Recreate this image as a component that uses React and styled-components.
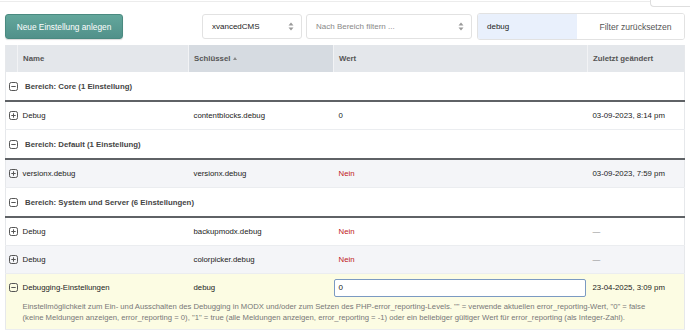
import React from "react";
import styled, { createGlobalStyle } from "styled-components";

const GlobalStyle = createGlobalStyle`
    body {
        margin: 0;
        background: #fff;
        font-family: "Liberation Sans", Arial, sans-serif;
        color: #333;
    }
`;

const Page = styled.div`
    width: 690px;
    height: 331px;
    overflow: hidden;
`;

const TopStrip = styled.div`
    display: flex;
    height: 7px;
`;

const TopLine = styled.div`
    flex: 1;
    height: 1px;
    border-bottom: 1px solid #ececec;
`;

const TopTab = styled.div`
    width: 39px;
    height: 6px;
    border-left: 1px solid #dedede;
    border-bottom: 1px solid #dedede;
    border-bottom-left-radius: 4px;
`;

const Toolbar = styled.div`
    display: flex;
    justify-content: space-between;
    align-items: center;
    padding: 7px 5px 0 5px;
    height: 25px;
`;

const PrimaryButton = styled.button`
    height: 25px;
    width: 118px;
    padding: 0;
    border: 1px solid #4a8a80;
    border-radius: 3px;
    background: linear-gradient(#63a79c, #51918a);
    color: #fff;
    font-family: inherit;
    font-size: 8.3px;
    box-shadow: 0 1px 1px rgba(0, 0, 0, 0.15);
`;

const Filters = styled.div`
    display: flex;
    align-items: center;
    gap: 4px;
`;

const SelectBox = styled.div`
    box-sizing: border-box;
    display: flex;
    align-items: center;
    justify-content: space-between;
    width: ${(p) => p.$width}px;
    height: 25px;
    padding: 0 7px 0 9px;
    border: 1px solid #e2e2e2;
    border-radius: 3px;
    background: #fff;
    font-size: 8px;
    color: ${(p) => (p.$placeholder ? "#888" : "#222")};
    margin-right: ${(p) => p.$gapRight || 0}px;
`;

const SearchGroup = styled.div`
    display: flex;
    height: 25px;
    border: 1px solid #e2e2e2;
    border-radius: 3px;
    overflow: hidden;
`;

const SearchInput = styled.div`
    box-sizing: border-box;
    display: flex;
    align-items: center;
    width: 99px;
    padding-left: 9px;
    background: #e9f0fc;
    font-size: 8px;
    color: #222;
`;

const ResetButton = styled.div`
    box-sizing: border-box;
    display: flex;
    align-items: center;
    justify-content: center;
    width: 107px;
    padding-left: 10px;
    background: #fff;
    font-size: 8.6px;
    color: #555;
`;

const TableWrap = styled.div`
    padding: 6px 5px 0 5px;
`;

const Table = styled.table`
    width: 100%;
    border-collapse: collapse;
    table-layout: fixed;
    font-size: 7.8px;
    border-left: 1px solid #e6e8eb;
    border-right: 1px solid #e6e8eb;
`;

const HeadCell = styled.th`
    height: 27px;
    padding: 0 0 0 ${(p) => (p.$first ? 0 : 5)}px;
    text-align: left;
    font-weight: bold;
    color: #555;
    background: ${(p) => (p.$sorted ? "#d6dbe1" : "#e4e7eb")};
    border-left: ${(p) => (p.$first ? "none" : "1px solid #f2f3f5")};
`;

const SortArrow = styled.span`
    display: inline-block;
    margin-left: 3px;
    width: 0;
    height: 0;
    border-left: 2.5px solid transparent;
    border-right: 2.5px solid transparent;
    border-bottom: 3px solid #888;
    vertical-align: 1px;
`;

const GroupRow = styled.tr`
    background: #fff;
    border-bottom: 2px solid #5f6266;
`;

const GroupCell = styled.td`
    height: 28px;
    padding: 0 0 0 5px;
    font-weight: bold;
    color: #444;
`;

const DataRow = styled.tr`
    background: ${(p) => (p.$active ? "#fcfce3" : p.$alt ? "#f4f5f8" : "#fff")};
    border-bottom: ${(p) => (p.$last ? "none" : "1px solid #ebedf0")};
`;

const Cell = styled.td`
    height: ${(p) => p.$h || 27}px;
    padding: 0 0 0 ${(p) => (p.$flush ? 0 : 5)}px;
    color: ${(p) => p.$color || "#222"};
    white-space: nowrap;
    overflow: hidden;
`;

const IconCell = styled.td`
    padding: 0 0 0 3px;
    vertical-align: middle;
`;

const GroupInner = styled.div`
    display: flex;
    align-items: center;
    gap: 7px;
    margin-left: -5px;
    padding-left: 3px;
`;

const Dash = styled.span`
    color: #8c8c8c;
`;

const ValueInput = styled.div`
    box-sizing: border-box;
    display: flex;
    align-items: center;
    width: 252px;
    height: 18px;
    padding-left: 4px;
    border: 1px solid #7b9ac2;
    border-radius: 2px;
    background: #fff;
    color: #222;
    font-size: 8px;
`;

const DescCell = styled.td`
    padding: 0 18px 6px 5px;
    line-height: 11px;
    color: #777;
    font-size: 7.7px;
`;

function ToggleIcon({ open }) {
    return (
        <svg width="9" height="9" viewBox="0 0 9 9" style={{ display: "block" }}>
            <rect x="0.5" y="0.5" width="8" height="8" rx="1.8" fill="none" stroke="#555" strokeWidth="1" />
            <line x1="2.3" y1="4.5" x2="6.7" y2="4.5" stroke="#555" strokeWidth="1" />
            {!open && <line x1="4.5" y1="2.3" x2="4.5" y2="6.7" stroke="#555" strokeWidth="1" />}
        </svg>
    );
}

function UpDown() {
    return (
        <svg width="6" height="9" viewBox="0 0 6 9">
            <path d="M3 0.5 L5.5 3.5 L0.5 3.5 Z" fill="#999" />
            <path d="M3 8.5 L5.5 5.5 L0.5 5.5 Z" fill="#999" />
        </svg>
    );
}

const groups = [
    {
        title: "Bereich: Core (1 Einstellung)",
        rows: [{ name: "Debug", key: "contentblocks.debug", value: "0", date: "03-09-2023, 8:14 pm" }],
    },
    {
        title: "Bereich: Default (1 Einstellung)",
        rows: [{ name: "versionx.debug", key: "versionx.debug", value: "Nein", no: true, date: "03-09-2023, 7:59 pm", alt: true }],
    },
    {
        title: "Bereich: System und Server (6 Einstellungen)",
        rows: [
            { name: "Debug", key: "backupmodx.debug", value: "Nein", no: true },
            { name: "Debug", key: "colorpicker.debug", value: "Nein", no: true, alt: true },
        ],
    },
];

export default function App() {
    return (
        <Page>
            <GlobalStyle />
            <TopStrip>
                <TopLine />
                <TopTab />
            </TopStrip>

            <Toolbar>
                <PrimaryButton>Neue Einstellung anlegen</PrimaryButton>
                <Filters>
                    <SelectBox $width={100}>
                        xvancedCMS
                        <UpDown />
                    </SelectBox>
                    <SelectBox $width={166} $placeholder $gapRight={1}>
                        Nach Bereich filtern ...
                        <UpDown />
                    </SelectBox>
                    <SearchGroup>
                        <SearchInput>debug</SearchInput>
                        <ResetButton>Filter zurücksetzen</ResetButton>
                    </SearchGroup>
                </Filters>
            </Toolbar>

            <TableWrap>
                <Table>
                    <colgroup>
                        <col style={{ width: 12 }} />
                        <col style={{ width: 171 }} />
                        <col style={{ width: 145 }} />
                        <col style={{ width: 254 }} />
                        <col />
                    </colgroup>
                    <thead>
                        <tr>
                            <HeadCell $first />
                            <HeadCell>Name</HeadCell>
                            <HeadCell $sorted>
                                Schlüssel
                                <SortArrow />
                            </HeadCell>
                            <HeadCell>Wert</HeadCell>
                            <HeadCell>Zuletzt geändert</HeadCell>
                        </tr>
                    </thead>
                    <tbody>
                        {groups.map((g) => (
                            <React.Fragment key={g.title}>
                                <GroupRow>
                                    <GroupCell colSpan={5}>
                                        <GroupInner>
                                            <ToggleIcon open />
                                            {g.title}
                                        </GroupInner>
                                    </GroupCell>
                                </GroupRow>
                                {g.rows.map((r) => (
                                    <DataRow key={r.key} $alt={r.alt}>
                                        <IconCell>
                                            <ToggleIcon />
                                        </IconCell>
                                        <Cell>{r.name}</Cell>
                                        <Cell>{r.key}</Cell>
                                        <Cell $color={r.no ? "#c01818" : undefined}>{r.value}</Cell>
                                        <Cell>{r.date ? r.date : <Dash>—</Dash>}</Cell>
                                    </DataRow>
                                ))}
                            </React.Fragment>
                        ))}
                        <DataRow $active $last>
                            <IconCell>
                                <ToggleIcon open />
                            </IconCell>
                            <Cell $h={27}>Debugging-Einstellungen</Cell>
                            <Cell $h={27}>debug</Cell>
                            <Cell $h={27} $flush>
                                <ValueInput>0</ValueInput>
                            </Cell>
                            <Cell $h={27}>23-04-2025, 3:09 pm</Cell>
                        </DataRow>
                        <DataRow $active>
                            <td />
                            <DescCell colSpan={4}>
                                Einstellmöglichkeit zum Ein- und Ausschalten des Debugging in MODX und/oder zum Setzen des PHP-error_reporting-Levels. "" = verwende aktuellen error_reporting-Wert, "0" = false (keine Meldungen anzeigen, error_reporting = 0), "1" = true (alle Meldungen anzeigen, error_reporting = -1) oder ein beliebiger gültiger Wert für error_reporting (als Integer-Zahl).
                            </DescCell>
                        </DataRow>
                    </tbody>
                </Table>
            </TableWrap>
        </Page>
    );
}
